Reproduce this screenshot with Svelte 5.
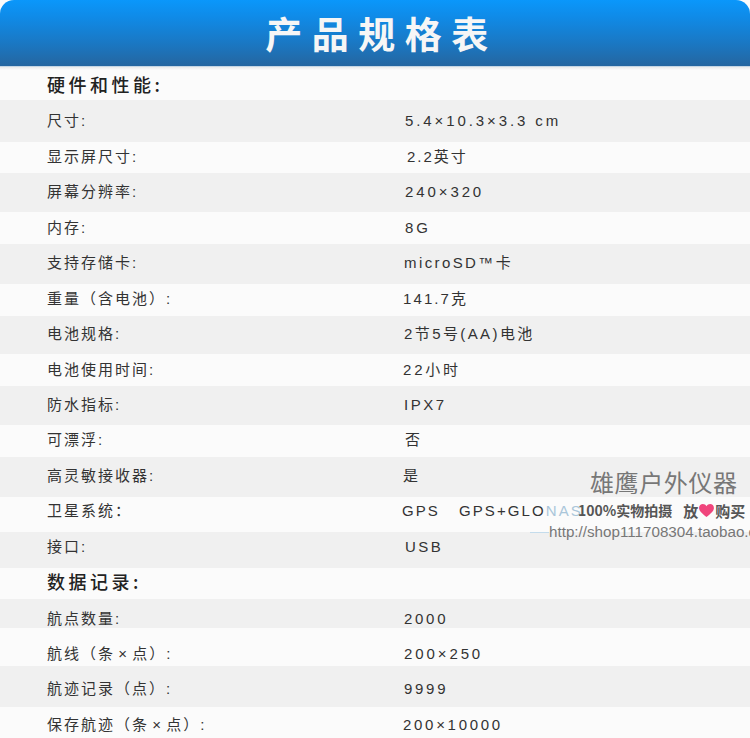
<script>
  // h = row height, pt = space above the text, x = value indent, ls = value letter spacing
  const sections = [
    {
      title: "硬件和性能:",
      rows: [
        { label: "尺寸:", value: "5.4×10.3×3.3 cm", h: 42, pt: 11, x: 5, ls: 2.900 },
        { label: "显示屏尺寸:", value: "2.2英寸", h: 31, pt: 5, x: 7, ls: 2 },
        { label: "屏幕分辨率:", value: "240×320", h: 39, pt: 9, x: 5, ls: 2.900 },
        { label: "内存:", value: "8G", h: 32, pt: 6, x: 5, ls: 2.800 },
        { label: "支持存储卡:", value: "microSD™卡", h: 40, pt: 9, x: 4, ls: 2.400 },
        { label: "重量（含电池）:", value: "141.7克", h: 32, pt: 5, x: 3, ls: 2.100 },
        { label: "电池规格:", value: "2节5号(AA)电池", h: 38, pt: 8, x: 4, ls: 2.400 },
        { label: "电池使用时间:", value: "22小时", h: 32, pt: 6, x: 3, ls: 2.800 },
        { label: "防水指标:", value: "IPX7", h: 39, pt: 9, x: 4, ls: 2.500 },
        { label: "可漂浮:", value: "否", h: 32, pt: 5, x: 5, ls: 2.800 },
        { label: "高灵敏接收器:", value: "是", h: 40, pt: 9, x: 3, ls: 2.800 },
        { label: "卫星系统：", value: "gnss", h: 35, pt: 4, x: 2, ls: 2.100 },
        { label: "接口:", value: "USB", h: 36, pt: 5, x: 5, ls: 2.400 },
      ],
    },
    {
      title: "数据记录:",
      rows: [
        { label: "航点数量:", value: "2000", h: 29, pt: 10, x: 4, ls: 2.700 },
        { label: "航线（条\u200a×\u200a点）:", value: "200×250", h: 38, pt: 16, x: 4, ls: 2.900 },
        { label: "航迹记录（点）:", value: "9999", h: 41, pt: 13, x: 4, ls: 2.700 },
        { label: "保存航迹（条\u200a×\u200a点）:", value: "200×10000", h: 31, pt: 8, x: 3, ls: 2.700 },
      ],
    },
  ];
</script>

<div class="page">
  <header class="banner"><h1>产品规格表</h1></header>
  <div class="rule"></div>

  {#each sections as section}
    <h2>{section.title}</h2>
    {#each section.rows as row, i}
      <div class="row" class:grey={i % 2 === 0} style:height="{row.h}px" style:padding-top="{row.pt}px">
        <span class="label">{row.label}</span>
        <span class="value" style:padding-left="{row.x}px" style:letter-spacing="{row.ls}px">
          {#if row.value === "gnss"}
            GPS<span class="gap"></span>GPS+GLO<span class="faded">NAS</span>
          {:else}
            {row.value}
          {/if}
        </span>
      </div>
    {/each}
  {/each}

  <div class="watermark">
    <div class="brand">雄鹰户外仪器</div>
    <div class="slogan">
      <span>100%实物拍摄</span>
      <span class="buy">放<svg viewBox="0 0 16 14" width="15" height="13"><path d="M8 14C3 10 0 7.500 0 4.200 0 1.700 1.900 0 4.100 0 5.700 0 7.200.9 8 2.300 8.800.9 10.300 0 11.900 0 14.100 0 16 1.700 16 4.200 16 7.500 13 10 8 14Z" fill="#f0457c"/></svg>购买</span>
    </div>
    <div class="url"><i></i>http://shop111708304.taobao.com</div>
  </div>
</div>

<style>
  :global(body) {
    margin: 0;
    background: #fff;
  }
  .page {
    position: relative;
    width: 750px;
    height: 738px;
    overflow: hidden;
    background: #fbfbfb;
    color: #333;
    font-family: "Liberation Sans", "Noto Sans CJK SC", sans-serif;
  }
  .banner {
    height: 66px;
    display: flex;
    align-items: center;
    justify-content: center;
    border-radius: 14px 14px 0 0;
    background: linear-gradient(#0a97fb, #0f8be8 25%, #1a78c4 65%, #2566a0);
  }
  h1 {
    margin: 0;
    padding-left: 13px;
    color: #f6f6f6;
    font-size: 37px;
    line-height: 66px;
    font-weight: 700;
    letter-spacing: 9.500px;
    font-family: "Noto Sans CJK SC", sans-serif;
  }
  .rule {
    height: 4px;
    background: linear-gradient(#a9c6de, #ececec 30%, #fbfbfb);
  }
  h2 {
    margin: 0;
    height: 30px;
    padding-left: 47px;
    font-size: 18px;
    font-weight: 500;
    letter-spacing: 3.500px;
    color: #222;
    font-family: "Noto Sans CJK SC", sans-serif;
    line-height: 28px;
  }
  h2:not(:first-of-type) {
    height: 31px;
    line-height: 26px;
  }
  .row {
    box-sizing: border-box;
    display: grid;
    grid-template-columns: 400px 1fr;
    font-size: 15px;
    line-height: 20px;
    letter-spacing: 2px;
  }
  .grey {
    background: #f0f0f0;
  }
  .label {
    padding-left: 47px;
  }
  .value {
    white-space: nowrap;
  }
  .gap {
    display: inline-block;
    width: 19px;
  }
  .faded {
    color: #aac6da;
  }
  .watermark {
    position: absolute;
    left: 530px;
    top: 467px;
    width: 220px;
    color: #666;
    white-space: nowrap;
  }
  .brand {
    padding-left: 60px;
    font-size: 24px;
    line-height: 30px;
    letter-spacing: 0.600px;
    color: #777;
    font-family: "Noto Sans CJK SC", sans-serif;
  }
  .slogan {
    display: flex;
    align-items: center;
    gap: 11px;
    padding-left: 48px;
    height: 26px;
    font-size: 14px;
    font-weight: 700;
    color: #555;
    font-family: "Noto Sans CJK SC", sans-serif;
  }
  .buy {
    display: flex;
    align-items: center;
    gap: 1px;
    font-size: 15px;
  }
  .url {
    display: flex;
    align-items: center;
    font-size: 15.200px;
    line-height: 18px;
    color: #777;
  }
  .url i {
    flex: none;
    width: 19px;
    height: 1px;
    background: #c4dcec;
  }
</style>
